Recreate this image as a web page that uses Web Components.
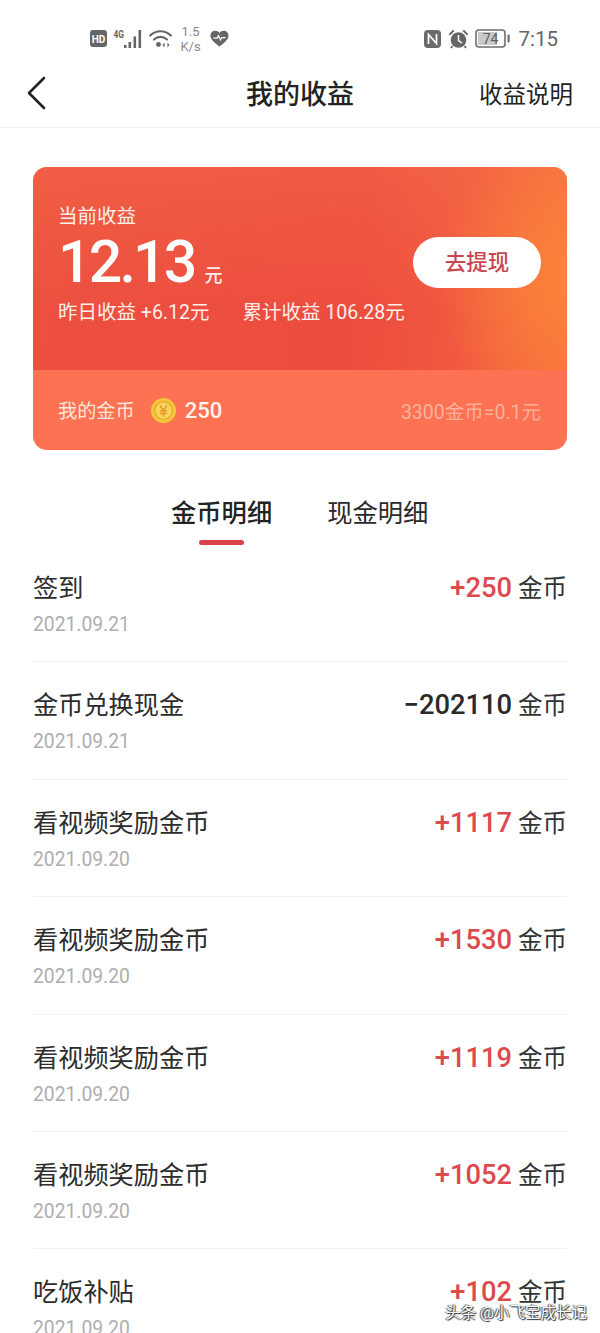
<!DOCTYPE html>
<html lang="zh">
<head>
<meta charset="utf-8">
<title>我的收益</title>
<style>
  html, body { margin: 0; background: #fff; height: 1333px; overflow: hidden; }
  body { font-family: Roboto, "Noto Sans CJK SC", sans-serif; }
</style>
</head>
<body>
<earnings-page>
  <status-bar></status-bar>
  <nav-bar title="我的收益" action="收益说明"></nav-bar>
  <earnings-card></earnings-card>
  <tab-bar></tab-bar>
  <ledger-row name="签到" date="2021.09.21" amount="+250"></ledger-row>
  <ledger-row name="金币兑换现金" date="2021.09.21" amount="-202110"></ledger-row>
  <ledger-row name="看视频奖励金币" date="2021.09.20" amount="+1117"></ledger-row>
  <ledger-row name="看视频奖励金币" date="2021.09.20" amount="+1530"></ledger-row>
  <ledger-row name="看视频奖励金币" date="2021.09.20" amount="+1119"></ledger-row>
  <ledger-row name="看视频奖励金币" date="2021.09.20" amount="+1052"></ledger-row>
  <ledger-row name="吃饭补贴" date="2021.09.20" amount="+102"></ledger-row>
  <water-mark>头条 @小飞宝成长记</water-mark>
</earnings-page>

<script>
class EarningsPage extends HTMLElement {
    constructor() {
        super();
        this.attachShadow({ mode: 'open' });
        this.shadowRoot.innerHTML = `
            <style>
                :host {
                    display: block;
                    position: relative;
                    width: 600px;
                    height: 1333px;
                    overflow: hidden;
                    background: #fff;
                    color: #2a2a2a;
                }
            </style>
            <slot></slot>
        `;
    }
}

class StatusBar extends HTMLElement {
    constructor() {
        super();
        this.attachShadow({ mode: 'open' });
        this.shadowRoot.innerHTML = `
            <style>
                :host {
                    display: flex;
                    justify-content: space-between;
                    align-items: center;
                    box-sizing: border-box;
                    height: 65px;
                    padding: 12px 42px 0 90px;
                    color: #6e6e6e;
                }
                .group { display: flex; align-items: center; }
                svg { display: block; flex: none; }
                .speed {
                    font-size: 13px;
                    line-height: 15px;
                    text-align: center;
                    color: #8a8a8a;
                    margin: 0 9px 0 8px;
                    width: 21px;
                }
                .time { font-size: 20.500px; color: #666; margin-left: 8px; }
                .batt { margin-left: 6px; }
                .alarm { margin-left: 7px; }
            </style>
            <div class="group">
                <svg width="17" height="17" viewBox="0 0 17 17">
                    <rect width="17" height="17" rx="3" fill="#666"/>
                    <text x="8.500" y="12.500" font-family="Roboto" font-weight="700" font-size="10" fill="#fff" text-anchor="middle">HD</text>
                </svg>
                <svg width="30" height="20" viewBox="0 0 30 20" style="margin-left:6px">
                    <text x="0.500" y="9" font-family="Roboto" font-weight="700" font-size="11" textLength="10.500" lengthAdjust="spacingAndGlyphs" fill="#666">4G</text>
                    <g fill="#666">
                        <rect x="11" y="16" width="2.600" height="3"/>
                        <rect x="15.500" y="13" width="2.600" height="6"/>
                        <rect x="20.500" y="7.500" width="2.600" height="11.500"/>
                        <rect x="25.500" y="1" width="2.600" height="18"/>
                    </g>
                </svg>
                <svg width="23" height="20" viewBox="0 0 23 20" style="margin-left:6px">
                    <g fill="none" stroke="#666" stroke-width="2.200" stroke-linecap="round">
                        <path d="M1.200 6.500C7 .8 16 .8 21.800 6.500"/>
                        <path d="M5 10.500C8.800 7 14.200 7 18 10.500"/>
                    </g>
                    <circle cx="9.500" cy="15.500" r="2.400" fill="#666"/>
                    <path d="M15.500 13.500v5l-2-2.500zM18.500 13.500v5l2-2.500z" fill="#666"/>
                </svg>
                <div class="speed">1.5<br>K/s</div>
                <svg width="19" height="17" viewBox="0 0 20 18">
                    <path d="M10 17.500C4 13 .5 9.800 .5 5.800 .5 2.800 2.800 .8 5.500 .8 7.300 .8 9 1.700 10 3.300 11 1.700 12.700 .8 14.500 .8 17.200 .8 19.500 2.800 19.500 5.800 19.500 9.800 16 13 10 17.500Z" fill="#666"/>
                    <path d="M3.500 8.500H7.500L9 6l2 4.500 1.500-2.500H16.500" fill="none" stroke="#fff" stroke-width="1.300"/>
                </svg>
            </div>
            <div class="group">
                <svg width="17" height="18" viewBox="0 0 17 18">
                    <rect width="17" height="18" rx="4" fill="#6a6a6a"/>
                    <path d="M4.500 14V4.500L12.500 13.500V4" fill="none" stroke="#fff" stroke-width="1.700"/>
                </svg>
                <svg class="alarm" width="21" height="20" viewBox="0 0 21 20">
                    <circle cx="10.500" cy="11" r="7.800" fill="#666"/>
                    <path d="M10.500 6v5.500l3.500 2.500" fill="none" stroke="#fff" stroke-width="1.500"/>
                    <path d="M.8 5 5 .8 6.500 2 2 6.500zM20.200 5 16 .8 14.500 2 19 6.500z" fill="#666"/>
                    <path d="M4.500 17 3 19M16.500 17l1.500 2" stroke="#666" stroke-width="1.800"/>
                </svg>
                <svg class="batt" width="35" height="19" viewBox="0 0 35 19">
                    <rect x="1" y="1" width="29" height="17" rx="3" fill="#fff" stroke="#6e6e6e" stroke-width="1.600"/>
                    <rect x="3" y="3" width="19" height="13" fill="#c9c9c9"/>
                    <rect x="32.500" y="5.500" width="2.200" height="8" rx="1" fill="#6e6e6e"/>
                    <text x="15.500" y="14.500" font-family="Roboto" font-size="14" fill="#5e5e5e" text-anchor="middle">74</text>
                </svg>
                <span class="time">7:15</span>
            </div>
        `;
    }
}

class NavBar extends HTMLElement {
    constructor() {
        super();
        this.attachShadow({ mode: 'open' });
        this.shadowRoot.innerHTML = `
            <style>
                :host {
                    display: grid;
                    grid-template-columns: 1fr auto 1fr;
                    align-items: center;
                    box-sizing: border-box;
                    height: 63px;
                    padding: 0 27px 3px 27px;
                    border-bottom: 1px solid #f1f1f1;
                    color: #222;
                }
                svg { display: block; margin-top: -4px; }
                h1 { margin: 0; font-size: 27px; font-weight: 500; line-height: 36px; }
                .action { justify-self: end; font-size: 23.500px; line-height: 34px; }
            </style>
            <svg width="20" height="34" viewBox="0 0 20 34">
                <path d="M17 2 2 17l15 15" fill="none" stroke="#222" stroke-width="2.600" stroke-linecap="round" stroke-linejoin="round"/>
            </svg>
            <h1>${this.getAttribute('title')}</h1>
            <div class="action">${this.getAttribute('action')}</div>
        `;
    }
}

class EarningsCard extends HTMLElement {
    constructor() {
        super();
        this.attachShadow({ mode: 'open' });
        this.shadowRoot.innerHTML = `
            <style>
                :host {
                    display: block;
                    margin: 39px 33px 0;
                    height: 283px;
                    border-radius: 14px;
                    overflow: hidden;
                    color: #fff;
                }
                .top {
                    box-sizing: border-box;
                    height: 203px;
                    padding: 37px 26px 0 25px;
                    display: flex;
                    justify-content: space-between;
                    background:
                        radial-gradient(ellipse 28% 85% at 104% 55%, #fc8736 0%, rgba(250,128,58,.75) 45%, rgba(248,120,60,0) 100%),
                        linear-gradient(180deg, rgba(248,122,76,.34) 0%, rgba(240,90,64,0) 72%),
                        linear-gradient(98deg, #ec5040 0%, #ec4c3f 60%, #f0593f 80%, #f56c3f 100%);
                }
                .label { font-size: 19.500px; line-height: 26px; color: #fdeee8; }
                .value {
                    display: flex;
                    align-items: baseline;
                    margin-top: 3px;
                    line-height: 58px;
                }
                .value b { font-size: 59px; font-weight: 500; letter-spacing: -2.800px; }
                .value span { font-size: 18px; font-weight: 500; margin-left: 10px; color: #fdeee8; }
                .stats {
                    display: flex;
                    gap: 33px;
                    margin-top: -5px;
                    font-size: 19.500px;
                    line-height: 26px;
                    color: #fdeee8;
                    white-space: nowrap;
                }
                button {
                    all: unset;
                    box-sizing: border-box;
                    width: 128px;
                    height: 51px;
                    margin-top: 33px;
                    border-radius: 26px;
                    background: #fff;
                    color: #c9464f;
                    text-align: center;
                    font-size: 21.500px;
                    font-weight: 500;
                    line-height: 51px;
                }
                .bottom {
                    box-sizing: border-box;
                    height: 80px;
                    padding: 0 26px 0 25px;
                    display: flex;
                    align-items: center;
                    background: #fc7253;
                }
                .coins { font-size: 19.200px; color: #fde5dc; }
                svg { display: block; margin: 0 9px 0 16px; }
                .count { font-size: 22px; font-weight: 500; color: #fff3ec; }
                .rate { margin-left: auto; font-size: 19.500px; color: #fbb09c; }
            </style>
            <div class="top">
                <div>
                    <div class="label">当前收益</div>
                    <div class="value"><b>12.13</b><span>元</span></div>
                    <div class="stats"><span>昨日收益 +6.12元</span><span>累计收益 106.28元</span></div>
                </div>
                <button>去提现</button>
            </div>
            <div class="bottom">
                <span class="coins">我的金币</span>
                <svg width="25" height="25" viewBox="0 0 25 25">
                    <circle cx="12.500" cy="12.500" r="12.500" fill="#f5c63a"/>
                    <circle cx="12.500" cy="12.500" r="8.800" fill="#f8d45c" stroke="#eba82c" stroke-width="1.300"/>
                    <path d="M9 7.500l3.500 5 3.500-5M12.500 12.500v6M9 13h7M9 15.500h7" fill="none" stroke="#e79a2a" stroke-width="1.400"/>
                </svg>
                <span class="count">250</span>
                <span class="rate">3300金币=0.1元</span>
            </div>
        `;
    }
}

class TabBar extends HTMLElement {
    constructor() {
        super();
        this.attachShadow({ mode: 'open' });
        this.shadowRoot.innerHTML = `
            <style>
                :host {
                    display: flex;
                    gap: 55px;
                    box-sizing: border-box;
                    height: 95px;
                    padding: 47px 0 0 171px;
                    font-size: 25.300px;
                    line-height: 34px;
                    color: #2a2a2a;
                }
                .tab { position: relative; white-space: nowrap; }
                .tab.active { font-weight: 500; color: #222; }
                .tab.active::after {
                    content: "";
                    position: absolute;
                    left: 28px;
                    top: 43px;
                    width: 45px;
                    height: 5px;
                    border-radius: 3px;
                    background: #d9424a;
                }
            </style>
            <div class="tab active">金币明细</div>
            <div class="tab">现金明细</div>
        `;
    }
}

class LedgerRow extends HTMLElement {
    constructor() {
        super();
        this.attachShadow({ mode: 'open' });
        const amount = this.getAttribute('amount');
        const sign = amount.startsWith('-') ? 'minus' : 'plus';
        this.shadowRoot.innerHTML = `
            <style>
                :host {
                    display: block;
                    box-sizing: border-box;
                    height: 117.400px;
                    margin: 0 33px;
                    padding-top: 25px;
                    border-bottom: 1px solid #f2f2f2;
                }
                .line {
                    display: flex;
                    justify-content: space-between;
                    align-items: baseline;
                    line-height: 36px;
                }
                .name { font-size: 25.200px; color: #2c2c2c; }
                .amount { font-size: 27.300px; font-weight: 500; }
                .plus { color: #dc4a4e; }
                .minus { color: #2a2a2a; }
                .unit { font-size: 24.500px; color: #333; margin-left: 6px; }
                .date { margin-top: 3px; font-size: 19.300px; line-height: 24px; color: #aeaeae; }
            </style>
            <div class="line">
                <span class="name">${this.getAttribute('name')}</span>
                <span><span class="amount ${sign}">${amount.replace('-', '−')}</span><span class="unit">金币</span></span>
            </div>
            <div class="date">${this.getAttribute('date')}</div>
        `;
    }
}

class WaterMark extends HTMLElement {
    constructor() {
        super();
        this.attachShadow({ mode: 'open' });
        this.shadowRoot.innerHTML = `
            <style>
                :host {
                    position: absolute;
                    right: 13px;
                    top: 1302px;
                    font-size: 15.500px;
                    line-height: 22px;
                    color: #fff;
                    white-space: nowrap;
                    text-shadow: 0 0 1px #222, 1px 1px 1px #333, -1px 0 1px #555;
                }
            </style>
            <slot></slot>
        `;
    }
}

customElements.define('earnings-page', EarningsPage);
customElements.define('status-bar', StatusBar);
customElements.define('nav-bar', NavBar);
customElements.define('earnings-card', EarningsCard);
customElements.define('tab-bar', TabBar);
customElements.define('ledger-row', LedgerRow);
customElements.define('water-mark', WaterMark);
</script>
</body>
</html>
